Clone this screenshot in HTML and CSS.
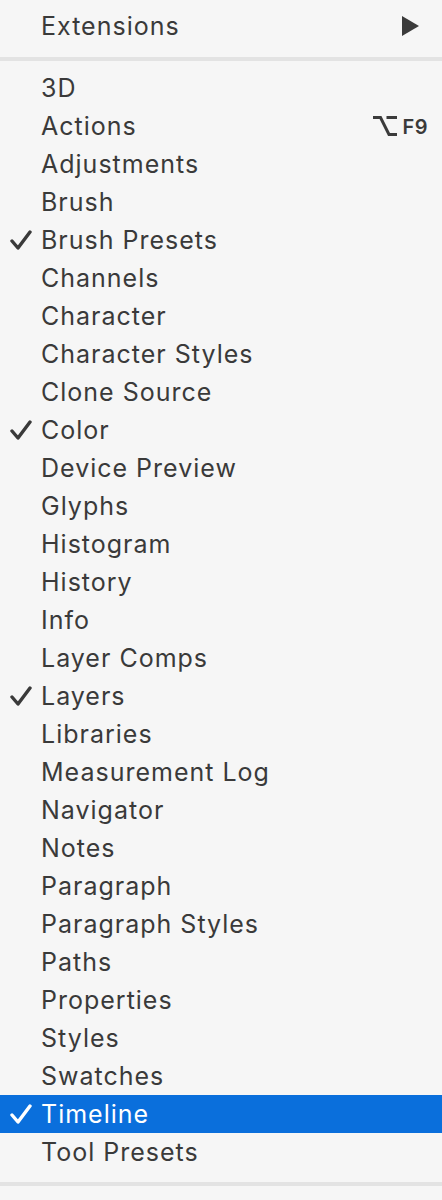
FILE: index.html
```html
<!DOCTYPE html>
<html>
<head>
<meta charset="utf-8">
<link rel="stylesheet" href="styles.css">
</head>
<body>
<div class="menu">
  <div class="item"><span class="label">Extensions</span><svg class="arrow" width="17" height="20" viewBox="0 0 17 20"><polygon points="0,0 17,10 0,20" fill="#3b3b3b"/></svg></div>
  <div class="sep"></div>
  <div class="item"><span class="label">3D</span></div>
  <div class="item"><span class="label">Actions</span><span class="shortcut"><svg class="opt" width="24" height="20" viewBox="0 0 24 20"><path d="M0 1.5 H7.5 L16 18.5 H24 M13.5 1.5 H24" fill="none" stroke="#3b3b3b" stroke-width="3"/></svg><span>F9</span></span></div>
  <div class="item"><span class="label">Adjustments</span></div>
  <div class="item"><span class="label">Brush</span></div>
  <div class="item checked"><svg class="check" width="22" height="20" viewBox="0 0 22 20"><path d="M2 11 L8 18 L20 2" fill="none" stroke="currentColor" stroke-width="3.4" stroke-linecap="round" stroke-linejoin="round"/></svg><span class="label">Brush Presets</span></div>
  <div class="item"><span class="label">Channels</span></div>
  <div class="item"><span class="label">Character</span></div>
  <div class="item"><span class="label">Character Styles</span></div>
  <div class="item"><span class="label">Clone Source</span></div>
  <div class="item checked"><svg class="check" width="22" height="20" viewBox="0 0 22 20"><path d="M2 11 L8 18 L20 2" fill="none" stroke="currentColor" stroke-width="3.4" stroke-linecap="round" stroke-linejoin="round"/></svg><span class="label">Color</span></div>
  <div class="item"><span class="label">Device Preview</span></div>
  <div class="item"><span class="label">Glyphs</span></div>
  <div class="item"><span class="label">Histogram</span></div>
  <div class="item"><span class="label">History</span></div>
  <div class="item"><span class="label">Info</span></div>
  <div class="item"><span class="label">Layer Comps</span></div>
  <div class="item checked"><svg class="check" width="22" height="20" viewBox="0 0 22 20"><path d="M2 11 L8 18 L20 2" fill="none" stroke="currentColor" stroke-width="3.4" stroke-linecap="round" stroke-linejoin="round"/></svg><span class="label">Layers</span></div>
  <div class="item"><span class="label">Libraries</span></div>
  <div class="item"><span class="label">Measurement Log</span></div>
  <div class="item"><span class="label">Navigator</span></div>
  <div class="item"><span class="label">Notes</span></div>
  <div class="item"><span class="label">Paragraph</span></div>
  <div class="item"><span class="label">Paragraph Styles</span></div>
  <div class="item"><span class="label">Paths</span></div>
  <div class="item"><span class="label">Properties</span></div>
  <div class="item"><span class="label">Styles</span></div>
  <div class="item"><span class="label">Swatches</span></div>
  <div class="item checked active"><svg class="check" width="22" height="20" viewBox="0 0 22 20"><path d="M2 11 L8 18 L20 2" fill="none" stroke="currentColor" stroke-width="3.4" stroke-linecap="round" stroke-linejoin="round"/></svg><span class="label">Timeline</span></div>
  <div class="item"><span class="label">Tool Presets</span></div>
  <div class="sep bottom"></div>
</div>
</body>
</html>
```
FILE: styles.css
```css
html, body {
  margin: 0;
  padding: 0;
  background: #f6f6f6;
}
.menu {
  padding-top: 7px;
  font-family: Inter, "Noto Sans", sans-serif;
  font-size: 25px;
  letter-spacing: 1px;
  color: #3a3a3a;
}
.item {
  position: relative;
  height: 38px;
  display: flex;
  align-items: center;
  padding-left: 41px;
  padding-right: 14px;
}
.label {
  flex: 1;
  white-space: nowrap;
}
.arrow {
  margin-right: 9px;
}
.shortcut {
  display: flex;
  align-items: center;
  gap: 5px;
  font-size: 20px;
  font-weight: 600;
  letter-spacing: 0.5px;
  padding-top: 2px;
}
.opt {
  margin-top: -2px;
}
.check {
  position: absolute;
  left: 10px;
  top: 9px;
  color: #3a3a3a;
}
.active {
  background: #0a6fdc;
  color: #ffffff;
}
.active .check {
  color: #ffffff;
}
.sep {
  height: 4px;
  background: #e3e3e3;
  margin: 12px 0 8px;
}
.sep.bottom {
  margin: 11px 0 0;
}
```
